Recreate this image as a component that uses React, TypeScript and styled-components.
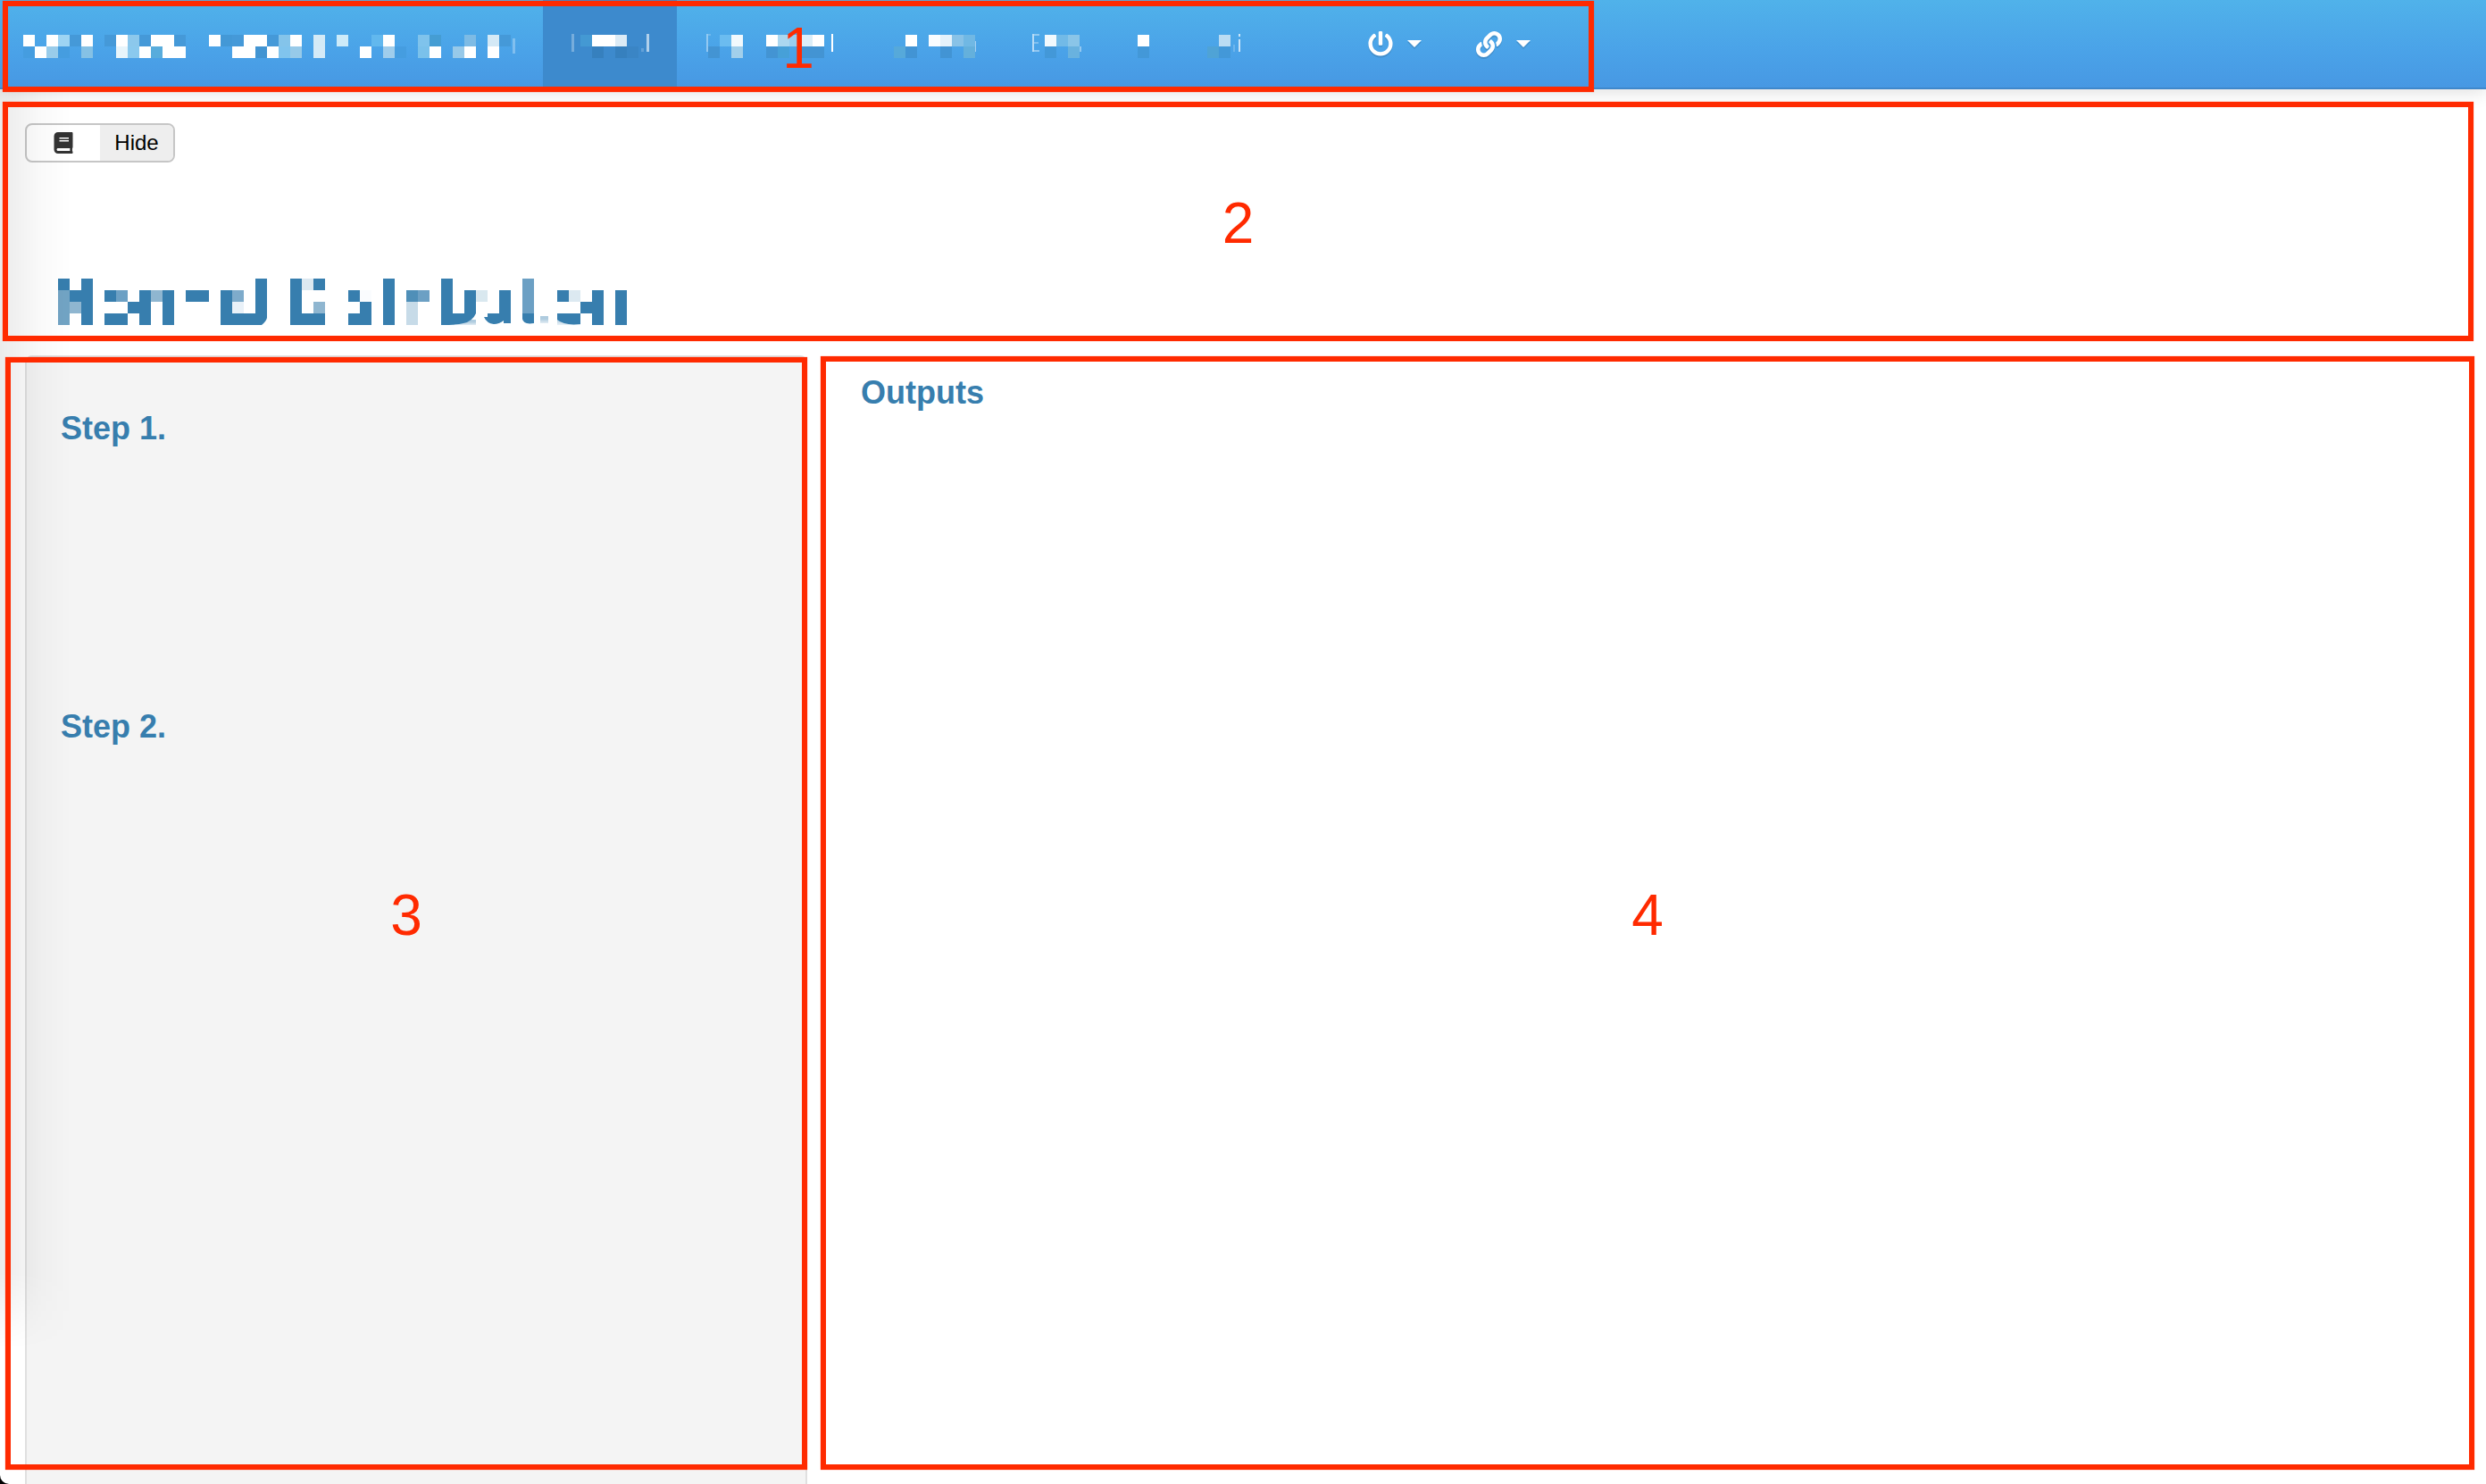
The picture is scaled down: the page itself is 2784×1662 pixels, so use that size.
import React from "react";
import styled, { createGlobalStyle } from "styled-components";
import { FaBook, FaCaretDown, FaLink, FaPowerOff } from "react-icons/fa";

const CELL = 13;
const NAV_ROW = 39;

const GlobalStyle = createGlobalStyle`
  *, *::before, *::after { box-sizing: border-box; }
  html { background: #000; }
  body {
    margin: 0;
    font-family: "Liberation Sans", Arial, Helvetica, sans-serif;
    color: #000;
  }
`;

const Page = styled.div`
  position: relative;
  min-height: 100vh;
  display: flex;
  flex-direction: column;
  overflow: hidden;
  background: #fff;
  border-bottom-left-radius: 10px;
`;

const EdgeShade = styled.div`
  position: absolute;
  inset: 100px auto 152px 0;
  width: 80px;
  pointer-events: none;
  background: linear-gradient(to right, rgba(0, 0, 0, 0.08), rgba(0, 0, 0, 0.02) 60%, transparent);
  mask-image: linear-gradient(to bottom, #000 94%, transparent);
`;

const Frame = styled.div<{ $inset: string }>`
  position: absolute;
  inset: ${(p) => p.$inset};
  z-index: 2;
  display: flex;
  align-items: center;
  justify-content: center;
  padding-top: 4px;
  border: 6px solid #ff2a00;
  box-shadow: 0 0 1px rgba(255, 42, 0, 0.7);
  color: #ff2a00;
  font-size: 64px;
  line-height: 72px;
  pointer-events: none;
`;

const NavBar = styled.header`
  position: relative;
  z-index: 1;
  display: flex;
  height: 100px;
  background: linear-gradient(#50b2ea, #4aa2e8 60%, #4798e3);
  border-bottom: 2px solid #3f88cb;
  box-shadow: 0 2px 20px rgba(0, 0, 0, 0.14);
`;

const NavGroup = styled.nav`
  position: relative;
  display: flex;
  padding-right: 36px;
`;

const NavLink = styled.a<{ $active?: boolean }>`
  display: flex;
  align-items: center;
  padding: 0 30px;
  background: ${(p) => (p.$active ? "#3d8acd" : "transparent")};
  color: #fff;
  text-decoration: none;
`;

const Brand = styled(NavLink)`
  padding-left: 26px;
`;

const NavMenu = styled.button`
  display: flex;
  align-items: center;
  gap: 16px;
  padding: 0 31px 0 30px;
  border: 0;
  background: none;
  color: #fff;
  filter: drop-shadow(0 2px 0 rgba(0, 0, 0, 0.12));
`;

const Caret = styled.svg`
  display: block;
  width: 16px;
  height: 8px;
`;

const Drawing = styled.svg`
  display: block;
  flex: none;
`;

const Intro = styled.section`
  position: relative;
  padding: 38px 28px 34px;
`;

const ButtonGroup = styled.div`
  display: inline-flex;
  height: 44px;
  border: 2px solid #c6c6c6;
  border-radius: 8px;
  overflow: hidden;
`;

const GroupButton = styled.button<{ $filled?: boolean }>`
  display: flex;
  align-items: center;
  justify-content: center;
  width: 82px;
  padding: 0;
  border: 0;
  background: ${(p) => (p.$filled ? "#eee" : "transparent")};
  color: ${(p) => (p.$filled ? "#000" : "#333")};
  font: 24px "Liberation Sans", Arial, sans-serif;
`;

const Title = styled.h1`
  margin: 130px 0 0;
  padding-left: 37px;
`;

const Columns = styled.main`
  flex: 1;
  display: grid;
  grid-template-columns: 1fr 2fr;
`;

const SideColumn = styled.div`
  position: relative;
  display: flex;
  padding: 0 24px 0 28px;
`;

const Well = styled.div`
  flex: 1;
  padding: 60px 38px 0;
  background: #f4f4f4;
  border: 2px solid #e0e0e0;
  border-bottom: 0;
  border-radius: 8px 8px 0 0;
`;

const Step = styled.section`
  min-height: 334px;
`;

const MainColumn = styled.section`
  position: relative;
  padding: 22px 36px;
`;

const Heading = styled.h2`
  margin: 0;
  color: #377eae;
  font-size: 36px;
  line-height: 40px;
`;

type Block = [col: number, row: number, fill: string, span?: number];
type Wisp = [x: number, y: number, width: number, height: number, opacity: number];

interface MosaicProps {
  label: string;
  x: number;
  width: number;
  originX?: number;
  blocks?: Block[];
  wisps?: Wisp[];
}

function Mosaic({ label, x, width, originX = x, blocks = [], wisps = [] }: MosaicProps) {
  return (
    <Drawing
      role="img"
      aria-label={label}
      width={width}
      height={40}
      viewBox={`${x} 29 ${width} 40`}
      shapeRendering="crispEdges"
    >
      {wisps.map(([wx, wy, w, h, opacity], i) => (
        <rect key={`w${i}`} x={wx} y={wy} width={w} height={h} fill="#fff" opacity={opacity} />
      ))}
      {blocks.map(([col, row, fill, span = 1], i) => (
        <rect
          key={i}
          x={originX + col * CELL}
          y={NAV_ROW + row * CELL}
          width={span * CELL}
          height={CELL}
          fill={fill}
        />
      ))}
    </Drawing>
  );
}

const W = "#fff";
const D = "#4599d8";

const brandBlocks: Block[] = [
  [0, 0, W], [2, 0, W], [3, 0, "#9dd4f3"], [4, 0, D], [5, 0, W], [7, 0, D], [8, 0, W],
  [9, 0, "#8cc8ec"], [10, 0, D], [11, 0, W, 2], [13, 0, D], [16, 0, W], [17, 0, "#4398d6"],
  [18, 0, D], [19, 0, W, 2], [21, 0, D], [22, 0, "#84c4ea"], [23, 0, W], [25, 0, "#d4eaf6"],
  [27, 0, "#cdebf9"], [30, 0, "#62b8ee"], [31, 0, W], [34, 0, "#7fc3ec"], [35, 0, "#459dd3"],
  [38, 0, "#7dbbe5"], [40, 0, "#d4e9f6"], [41, 0, D],
  [0, 1, "#459de0"], [1, 1, W], [2, 1, "#99ccea"], [3, 1, "#459de0"], [5, 1, "#85c1e5"],
  [8, 1, "#e8f5fb"], [9, 1, "#8ac9ee"], [10, 1, W], [11, 1, "#58acdc"], [12, 1, W, 2],
  [18, 1, W, 2], [20, 1, "#4294d2"], [21, 1, W], [22, 1, "#80c4ed"], [23, 1, "#97cae9"],
  [25, 1, "#d5eaf7"], [29, 1, W], [31, 1, "#9fcdec"], [32, 1, "#459de0"], [34, 1, "#7ac1eb"],
  [35, 1, W], [37, 1, "#97c9e9"], [38, 1, W], [40, 1, W],
];

const T = "#377eae";
const T2 = "#6ca0c4";
const T3 = "#8fb6d0";

const titleBlocks: Block[] = [
  [0, 0, T], [2, 0, T], [17, 0, T], [20, 0, T], [21, 0, "#dce8f0"], [22, 0, T], [28, 0, T],
  [33, 0, T], [40, 0, T2],
  [0, 1, "#72a4c4"], [1, 1, T, 2], [4, 1, T], [5, 1, T2], [7, 1, T], [8, 1, T3], [9, 1, T],
  [11, 1, T, 2], [14, 1, T], [15, 1, "#7eabcb"], [17, 1, T], [20, 1, T], [25, 1, T],
  [26, 1, "#fafcfe"], [28, 1, T], [30, 1, "#4f8fb8"], [31, 1, T2], [33, 1, T], [35, 1, T],
  [36, 1, "#d9e8ef"], [38, 1, T], [40, 1, T2], [43, 1, T], [44, 1, "#dce9f1"], [46, 1, T],
  [48, 1, T],
  [0, 2, "#72a4c4"], [1, 2, T3], [2, 2, T], [6, 2, T, 2], [9, 2, T], [14, 2, T],
  [15, 2, "#e9f1f8"], [17, 2, T], [20, 2, T], [22, 2, T3], [26, 2, T], [28, 2, T],
  [30, 2, "#c7dbe8"], [33, 2, T], [35, 2, T], [38, 2, T], [40, 2, T2], [45, 2, T, 2], [48, 2, T],
  [0, 3, "#72a4c4"], [2, 3, T], [4, 3, T, 2], [7, 3, T], [9, 3, T], [14, 3, T, 3],
  [20, 3, T, 3], [25, 3, T, 2], [28, 3, T], [30, 3, "#c7dbe8"], [46, 3, T], [48, 3, T],
];

function TitleMosaic() {
  return (
    <Drawing role="img" aria-label="Page title" width={637} height={52} viewBox="0 0 637 52">
      <defs>
        <linearGradient id="fade" x1="0" y1="0" x2="0" y2="1">
          <stop offset="0.4" stopColor={T} />
          <stop offset="1" stopColor={T} stopOpacity="0.35" />
        </linearGradient>
      </defs>
      {titleBlocks.map(([col, row, fill, span = 1], i) => (
        <rect
          key={i}
          shapeRendering="crispEdges"
          x={col * CELL}
          y={row * CELL}
          width={span * CELL}
          height={CELL}
          fill={fill}
        />
      ))}
      <path d="M221 39h13v5q-1 4-6 8h-7z" fill={T} />
      <path d="M429 39h39q-4 9-14 11q-8 2-25 2z" fill={T} />
      <path d="M429 46h39v6h-39z" fill="url(#fade)" opacity="0.4" />
      <path d="M477 43h4v-4h26v11h-8v-3q-5 4-11 4q-8-1-11-8z" fill={T} />
      <path d="M520 39h13v11q-12 2-13-5z" fill={T} />
      <path d="M540 42h9v8h-9z" fill="url(#fade)" opacity="0.4" />
      <path d="M559 39h26v12q-18 2-26-5z" fill={T} />
      <path d="M559 45h26v7h-26z" fill="url(#fade)" opacity="0.3" />
    </Drawing>
  );
}

function MenuCaret() {
  return (
    <Caret viewBox="0 0 16 8" aria-hidden="true">
      <path d="M0 0h16L8 8z" fill="currentColor" />
    </Caret>
  );
}

export default function App() {
  return (
    <>
      <GlobalStyle />
      <Page>
        <NavBar>
          <NavGroup>
            <Brand href="#">
              <Mosaic label="Site name" x={26} width={552} blocks={brandBlocks} wisps={[[574, 43, 3, 17, 0.3]]} />
            </Brand>
            <NavLink href="#" $active>
              <Mosaic
                label="Current page"
                x={638}
                width={90}
                originX={650}
                blocks={[
                  [0, 0, "#4499d3"], [1, 0, W, 2], [3, 0, "#dcebf6"],
                  [1, 1, "#3680be"], [3, 1, "#3680be"], [4, 1, "#3a85c5"],
                ]}
                wisps={[[640, 38, 3, 20, 0.3], [724, 38, 3, 20, 0.6], [718, 54, 3, 4, 0.2]]}
              />
            </NavLink>
            <NavLink href="#">
              <Mosaic
                label="Second page"
                x={788}
                width={150}
                originX={793}
                blocks={[
                  [1, 0, "#6bbcf0"], [2, 0, "#f2f9fd"], [5, 0, W], [6, 0, "#abd7f0"],
                  [7, 0, "#99cdf0"], [8, 0, "#dceef8"], [9, 0, W],
                  [0, 1, "#4394d3"], [2, 1, "#a2cfeb"], [5, 1, "#4394d3"], [6, 1, "#46a0d8"],
                  [8, 1, "#4394d3", 2],
                ]}
                wisps={[[791, 38, 2, 20, 0.4], [793, 38, 3, 2, 0.2], [931, 38, 2, 20, 1]]}
              />
            </NavLink>
            <NavLink href="#">
              <Mosaic
                label="Third page"
                x={998}
                width={96}
                originX={1001}
                blocks={[
                  [1, 0, W], [3, 0, "#fafdff"], [4, 0, "#e5f2fb"], [5, 0, "#88c2e7"], [6, 0, "#70b8e4"],
                  [0, 1, "#56a9da"], [1, 1, "#4294d4"], [4, 1, "#4294d4"], [6, 1, "#64b0dc"],
                ]}
                wisps={[[1091, 46, 2, 12, 0.5]]}
              />
            </NavLink>
            <NavLink href="#">
              <Mosaic
                label="Fourth page"
                x={1154}
                width={58}
                originX={1170}
                blocks={[
                  [0, 0, "#f2f9fd"], [1, 0, "#72bae7"], [2, 0, "#8ac5e8"],
                  [0, 1, "#4398d8"], [2, 1, "#69b2df"],
                ]}
                wisps={[
                  [1156, 38, 2, 20, 0.6], [1158, 38, 6, 2, 0.4], [1158, 47, 5, 2, 0.3],
                  [1158, 56, 6, 2, 0.4], [1209, 52, 2, 6, 0.4],
                ]}
              />
            </NavLink>
            <NavLink href="#">
              <Mosaic label="Fifth page" x={1272} width={18} originX={1274} blocks={[[0, 0, W], [0, 1, "#4398d8"]]} />
            </NavLink>
            <NavLink href="#">
              <Mosaic
                label="Sixth page"
                x={1350}
                width={43}
                originX={1352}
                blocks={[[1, 0, "#bbdcf3"], [0, 1, "#4fa3d6"], [1, 1, "#4398d8"]]}
                wisps={[[1387, 38, 2, 3, 0.7], [1387, 44, 2, 14, 0.7], [1381, 50, 2, 8, 0.2]]}
              />
            </NavLink>
            <NavLink href="#">
              <Mosaic label="Seventh page" x={1453} width={19} />
            </NavLink>
            <NavMenu type="button" aria-label="Power menu">
              <FaPowerOff size={28} />
              <MenuCaret />
            </NavMenu>
            <NavMenu type="button" aria-label="Links menu">
              <FaLink size={29} />
              <MenuCaret />
            </NavMenu>
            <Frame $inset="1px -4px -5px 3px">1</Frame>
          </NavGroup>
        </NavBar>

        <Intro>
          <ButtonGroup>
            <GroupButton type="button" aria-label="Instructions">
              <FaBook size={24} />
            </GroupButton>
            <GroupButton type="button" $filled>
              Hide
            </GroupButton>
          </ButtonGroup>
          <Title>
            <TitleMosaic />
          </Title>
          <Frame $inset="14px 14px 16px 3px">2</Frame>
        </Intro>

        <Columns>
          <SideColumn>
            <Well>
              <Step>
                <Heading>Step 1.</Heading>
              </Step>
              <Step>
                <Heading>Step 2.</Heading>
              </Step>
            </Well>
            <Frame $inset="2px 24px 16px 6px">3</Frame>
          </SideColumn>
          <MainColumn>
            <Heading>Outputs</Heading>
            <Frame $inset="1px 13px 16px -9px">4</Frame>
          </MainColumn>
        </Columns>
        <EdgeShade />
      </Page>
    </>
  );
}
